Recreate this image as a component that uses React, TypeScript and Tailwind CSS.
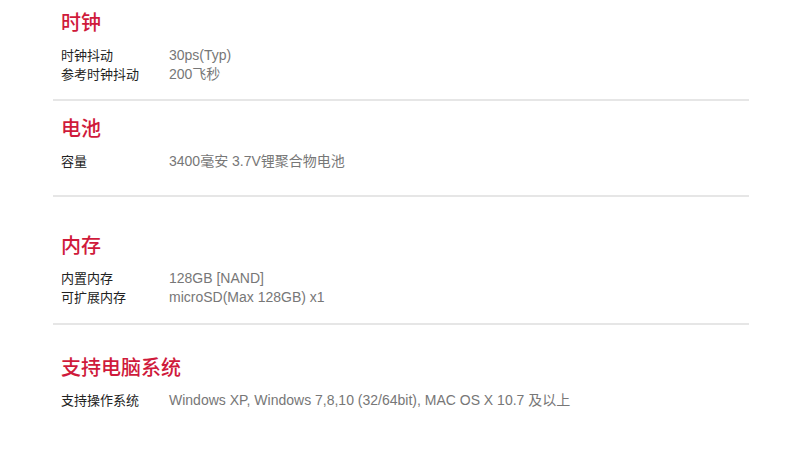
const sections = [
  {
    title: "时钟",
    pad: "pt-[9px] pb-[15px]",
    rows: [
      ["时钟抖动", "30ps(Typ)"],
      ["参考时钟抖动", "200飞秒"],
    ],
    divider: true,
  },
  {
    title: "电池",
    pad: "pt-[14px] pb-[24px]",
    rows: [["容量", "3400毫安 3.7V锂聚合物电池"]],
    divider: true,
  },
  {
    title: "内存",
    pad: "pt-[35px] pb-[16px]",
    rows: [
      ["内置内存", "128GB [NAND]"],
      ["可扩展内存", "microSD(Max 128GB) x1"],
    ],
    divider: true,
  },
  {
    title: "支持电脑系统",
    pad: "pt-[29px] pb-10",
    rows: [["支持操作系统", "Windows XP, Windows 7,8,10 (32/64bit), MAC OS X 10.7 及以上"]],
    divider: false,
  },
];

export default function App() {
  return (
    <div
      className="w-[790px] h-[461px] bg-white overflow-hidden"
      style={{ fontFamily: '"Liberation Sans", "Noto Sans CJK SC", sans-serif' }}
    >
      <div className="ml-[53px] w-[696px]">
        {sections.map((s) => (
          <section
            key={s.title}
            className={`${s.pad} ${s.divider ? "border-b-2 border-[#e6e6e6]" : ""}`}
          >
            <h2 className="px-2 h-7 leading-7 text-[20px] font-medium text-[#cf1a3b]">{s.title}</h2>
            <div className="mt-[9px] px-2">
              {s.rows.map(([label, value]) => (
                <div key={label} className="flex leading-[19px]">
                  <span className="w-[108px] shrink-0 text-[13px] text-[#222]">{label}</span>
                  <span className="text-[14px] text-[#777]">{value}</span>
                </div>
              ))}
            </div>
          </section>
        ))}
      </div>
    </div>
  );
}
